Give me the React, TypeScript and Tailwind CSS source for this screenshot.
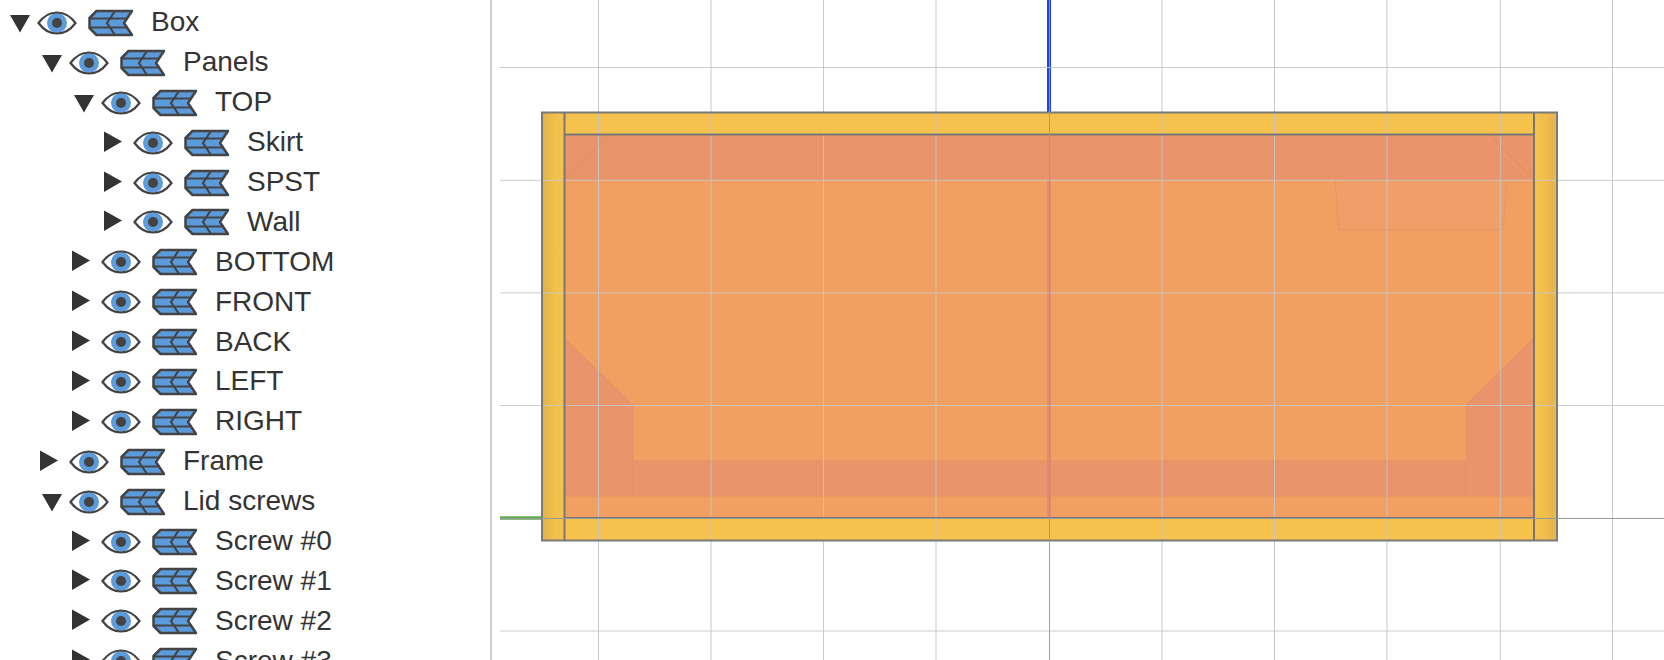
const rows: { label: string; depth: number; open: boolean }[] = [
  { label: "Box", depth: 0, open: true },
  { label: "Panels", depth: 1, open: true },
  { label: "TOP", depth: 2, open: true },
  { label: "Skirt", depth: 3, open: false },
  { label: "SPST", depth: 3, open: false },
  { label: "Wall", depth: 3, open: false },
  { label: "BOTTOM", depth: 2, open: false },
  { label: "FRONT", depth: 2, open: false },
  { label: "BACK", depth: 2, open: false },
  { label: "LEFT", depth: 2, open: false },
  { label: "RIGHT", depth: 2, open: false },
  { label: "Frame", depth: 1, open: false },
  { label: "Lid screws", depth: 1, open: true },
  { label: "Screw #0", depth: 2, open: false },
  { label: "Screw #1", depth: 2, open: false },
  { label: "Screw #2", depth: 2, open: false },
  { label: "Screw #3", depth: 2, open: false },
];

const depthPad = ["pl-[10px]", "pl-[42px]", "pl-[74px]", "pl-[106px]"];

function Caret({ open }: { open: boolean }) {
  return (
    <svg width="20" height="20" viewBox="0 0 20 20" className="shrink-0 overflow-visible">
      {open ? <path d="M0 2H20L10 19.500Z" fill="#333" /> : <path d="M-2 -1.500L16 8.500L-2 19Z" fill="#333" />}
    </svg>
  );
}

function Eye() {
  return (
    <svg width="40" height="26" viewBox="0 0 40 26" className="ml-[7px] shrink-0">
      <path d="M1.500 13C7 5.500 13 2.500 20 2.500S33 5.500 38.500 13C33 20.500 27 23.500 20 23.500S7 20.500 1.500 13Z" fill="#fff" />
      <circle cx="20" cy="13" r="10" fill="#5b9bdc" />
      <circle cx="20" cy="13" r="5" fill="#444" />
      <path d="M1.500 13C7 5.500 13 2.500 20 2.500S33 5.500 38.500 13C33 20.500 27 23.500 20 23.500S7 20.500 1.500 13Z" fill="none" stroke="#444" strokeWidth="2.200" />
    </svg>
  );
}

function Mesh() {
  return (
    <svg width="46" height="28" viewBox="0 0 46 28" className="ml-[11px] shrink-0">
      <path d="M1.500 19V9L8.500 2H44L36 14L44 26H8.500L1.500 19Z" fill="#5b9bdc" stroke="#444" strokeWidth="2.500" strokeLinejoin="round" />
      <path d="M1.500 9.500H39.500M1.500 18.500H39.500M27 2L19 14L27 26" fill="none" stroke="#444" strokeWidth="2.200" />
    </svg>
  );
}

function Viewport() {
  const gridX = [598.5, 711, 823.5, 936, 1162, 1274.5, 1387, 1500.3, 1612.5];
  const gridY = [67.5, 180.3, 292.9, 405.5, 631];
  return (
    <svg width="1172" height="660" viewBox="492 0 1172 660" className="block shrink-0">
      <defs>
        <linearGradient id="sideLeft" x1="0" x2="1" y1="0" y2="0">
          <stop offset="0" stopColor="#e2b24a" />
          <stop offset="0.25" stopColor="#e6b64a" />
          <stop offset="0.6" stopColor="#f3c04d" />
          <stop offset="1" stopColor="#f5c24d" />
        </linearGradient>
        <linearGradient id="sideRight" x1="0" x2="1" y1="0" y2="0">
          <stop offset="0" stopColor="#f5c24d" />
          <stop offset="0.5" stopColor="#f1be4c" />
          <stop offset="0.8" stopColor="#e6b54a" />
          <stop offset="1" stopColor="#ebbd55" />
        </linearGradient>
      </defs>
      <rect x="541" y="112" width="1016" height="429" fill="#f5c24d" />
      <rect x="564" y="135" width="970" height="383" fill="#f2a061" />
      <path d="M564 135H1534V180H564Z" fill="#e9946a" />
      <path d="M564 338L633 405V461H1466V405L1534 338V496H564Z" fill="#e9946a" />
      <path d="M633 405V496M633 461H1466V496M564 496H1534M564 338L633 405M1466 405L1534 338" fill="none" stroke="#e58f62" strokeWidth="1" />
      <path d="M608 135L565 178M1490 135L1534 180" stroke="#e58f62" strokeWidth="1.500" />
      <path d="M1335 180L1339 230H1503L1507 180" fill="#f19f68" stroke="#ea9868" strokeWidth="1.500" />
      <rect x="1047" y="180" width="4" height="338" fill="#dd8f70" />
      <rect x="541" y="112" width="23" height="429" fill="url(#sideLeft)" />
      <rect x="1534" y="112" width="23" height="429" fill="url(#sideRight)" />
      <line x1="1049" x2="1049" y1="0" y2="112" stroke="#1f40e8" strokeWidth="4" />
      <line x1="500" x2="541" y1="518" y2="518" stroke="#5fa84f" strokeWidth="3.500" />
      {gridX.map((x) => (
        <line key={x} x1={x} x2={x} y1="0" y2="660" stroke="#c6c6c6" strokeOpacity="0.95" strokeWidth="1" />
      ))}
      {gridY.map((y) => (
        <line key={y} x1="500" x2="1664" y1={y} y2={y} stroke="#c8c8c8" strokeOpacity="0.9" strokeWidth="1" />
      ))}
      <rect x="542" y="112.500" width="1015" height="428" fill="none" stroke="#7a7a7a" strokeWidth="2" />
      <path d="M564.500 112V541M1534 112V541" stroke="#777" strokeWidth="2" />
      <path d="M564 134.500H1534M564 518H1534" stroke="#777" strokeWidth="2" />
      <line x1="500" x2="1664" y1="518.500" y2="518.500" stroke="#999" strokeWidth="1" />
      <line x1="1049.500" x2="1049.500" y1="0" y2="660" stroke="#999" strokeOpacity="0.9" strokeWidth="1" />
    </svg>
  );
}

export default function App() {
  return (
    <div className="flex h-[660px] w-[1664px] overflow-hidden bg-white font-['Liberation_Sans',Arial,sans-serif] text-[#333]">
      <div className="h-full w-[492px] shrink-0 overflow-hidden border-r-2 border-[#d0d0d0] pt-[3px]">
        {rows.map((r) => (
          <div key={r.label} className={`flex h-[39.9px] items-center ${depthPad[r.depth]}`}>
            <Caret open={r.open} />
            <Eye />
            <Mesh />
            <span className="ml-[17px] mb-[1px] whitespace-nowrap text-[28px]">{r.label}</span>
          </div>
        ))}
      </div>
      <Viewport />
    </div>
  );
}
